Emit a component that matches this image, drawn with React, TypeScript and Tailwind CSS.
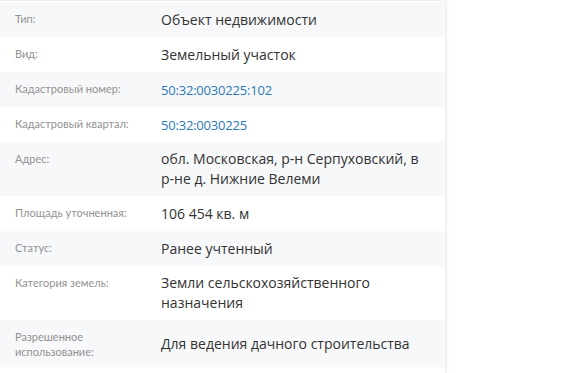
const rows: { label: string; value: string; link?: boolean }[] = [
  { label: 'Тип:', value: 'Объект недвижимости' },
  { label: 'Вид:', value: 'Земельный участок' },
  { label: 'Кадастровый номер:', value: '50:32:0030225:102', link: true },
  { label: 'Кадастровый квартал:', value: '50:32:0030225', link: true },
  { label: 'Адрес:', value: 'обл. Московская, р-н Серпуховский, в р-не д. Нижние Велеми' },
  { label: 'Площадь уточненная:', value: '106 454 кв. м' },
  { label: 'Статус:', value: 'Ранее учтенный' },
  { label: 'Категория земель:', value: 'Земли сельскохозяйственного назначения' },
  { label: 'Разрешенное использование:', value: 'Для ведения дачного строительства' },
]

export default function App() {
  return (
    <div className="h-[373px] w-[581px] overflow-hidden bg-white font-['Open_Sans',sans-serif]">
      <div className="h-full w-[445px] border-t border-[#eceef1] bg-white pt-px shadow-[2px_0_3px_rgba(0,0,0,0.07)]">
        {rows.map((r, i) => (
          <div
            key={r.label}
            className={`flex min-h-[35px] ${i % 2 === 0 ? 'bg-[#f7f8fa]' : 'bg-white'}`}
          >
            <div className="w-[161px] shrink-0 self-start pb-[8px] pl-[15px] pr-4 pt-[9px] font-['Lato',sans-serif] text-[11px] leading-[15px] text-[#929292]">
              {r.label}
            </div>
            <div
              className={`self-center py-[7px] pr-4 leading-[20px] ${
                r.link ? 'text-[13px] tracking-[-0.2px] text-[#2a78b4]' : 'text-[14px] text-[#333]'
              }`}
            >
              {r.value}
            </div>
          </div>
        ))}
      </div>
    </div>
  )
}
